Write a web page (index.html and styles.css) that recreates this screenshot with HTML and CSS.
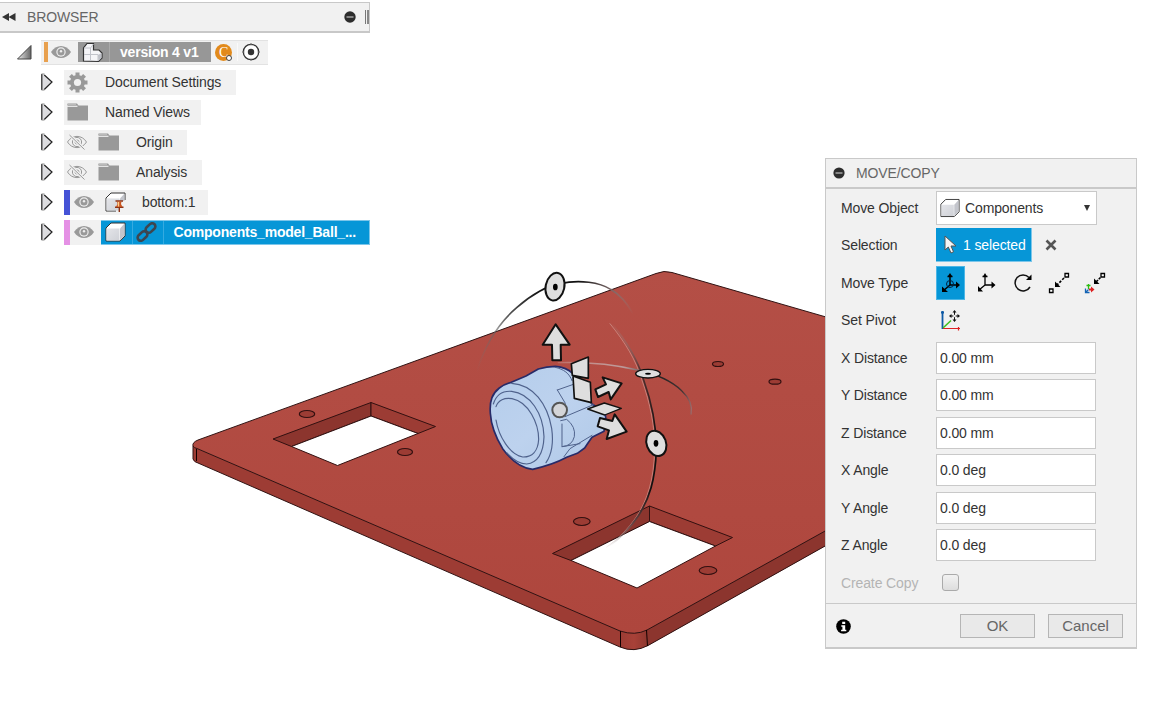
FILE: index.html
```html
<!DOCTYPE html>
<html lang="en">
<head>
<meta charset="utf-8">
<title>version 4 v1</title>
<link rel="stylesheet" href="styles.css">
</head>
<body>
<svg class="defs" width="0" height="0" aria-hidden="true">
  <defs>
    <linearGradient id="face" x1="0" y1="0" x2="1" y2="1"><stop offset="0" stop-color="#e4e5e9"/><stop offset="1" stop-color="#cfd1d7"/></linearGradient>
    <linearGradient id="tri" x1="0" y1="0" x2="1" y2="0"><stop offset="0" stop-color="#eee"/><stop offset="1" stop-color="#666"/></linearGradient>
    <symbol id="arrow-right" viewBox="0 0 13 18"><path d="M.8 1.500v15h2.700L11 9 3.500 1.500z" fill="#dcdcdf"/><path d="M.8 1v16M3.300 2 11 9 3.300 16.500" fill="none" stroke="#222" stroke-width="1.200"/><path d="M.5 1h3M.5 17h3" stroke="#888"/></symbol>
    <symbol id="eye" viewBox="0 0 20 14"><path d="M0 7C5-1 15-1 20 7 15 15 5 15 0 7z" fill="#999"/><circle cx="10" cy="7" r="4.7" fill="#eee"/><circle cx="10" cy="7" r="3.5" fill="#999"/><circle cx="10" cy="6.300" r="1.200" fill="#eee"/></symbol>
    <symbol id="eye-off" viewBox="0 0 20 16"><g fill="none" stroke="#999"><path d="M.5 8C5 .5 15 .5 19.5 8 15 15.500 5 15.500.5 8z"/><circle cx="10" cy="8" r="4.6"/><circle cx="10" cy="8" r="2"/><path d="M2.500 1 17.500 15.500" stroke="#f1f1f1" stroke-width="3"/><path d="M2.500 1 17.500 15.500"/></g></symbol>
    <symbol id="folder" viewBox="0 0 21 18"><path d="M.5.500h9.500l1.500 2H21V17.500H.5z" fill="#999"/><path d="M0 3.300h10.500" stroke="#eee" stroke-width="1.200"/><path d="M0 1.500h9" stroke="#bbb"/></symbol>
    <symbol id="cube" viewBox="0 0 21 20"><path d="M1 6 6 1h14v13l-5 5H1z" fill="#fff" stroke="#333"/><path d="M1.500 6.500h13v12h-13z" fill="url(#face)"/><path d="M15 6.500 19.500 1.500v12.300L15 18.500z" fill="#c3c5cc"/></symbol>
  </defs>
</svg>

<main class="viewport">
  <svg class="scene" viewBox="0 0 1161 702" width="1161" height="702">
    <defs>
      <linearGradient id="plate" x1="0" y1="0" x2="0" y2="1"><stop offset="0" stop-color="#b44f46"/><stop offset="1" stop-color="#ae463d"/></linearGradient>
      <linearGradient id="corner" x1="0" y1="0" x2="1" y2="0"><stop offset="0" stop-color="#9c3c34"/><stop offset=".5" stop-color="#a84138"/><stop offset="1" stop-color="#8f372f"/></linearGradient>
      <linearGradient id="ringTop" gradientUnits="userSpaceOnUse" x1="20" y1="0" x2="490" y2="0"><stop offset="0" stop-color="#777" stop-opacity="0"/><stop offset=".2" stop-color="#555"/><stop offset=".4" stop-color="#111"/><stop offset=".65" stop-color="#111"/><stop offset=".85" stop-color="#766"/><stop offset="1" stop-color="#888" stop-opacity="0"/></linearGradient>
      <linearGradient id="ringSide" gradientUnits="userSpaceOnUse" x1="0" y1="190" x2="0" y2="860"><stop offset="0" stop-color="#aaa" stop-opacity="0"/><stop offset=".2" stop-color="#533"/><stop offset=".5" stop-color="#111"/><stop offset=".75" stop-color="#111"/><stop offset=".9" stop-color="#644"/><stop offset="1" stop-color="#aaa" stop-opacity="0"/></linearGradient>
      <linearGradient id="ringFlat" gradientUnits="userSpaceOnUse" x1="260" y1="0" x2="670" y2="0"><stop offset="0" stop-color="#ddd" stop-opacity=".2"/><stop offset=".5" stop-color="#b99"/><stop offset=".75" stop-color="#222"/><stop offset=".92" stop-color="#433"/><stop offset="1" stop-color="#a77"/></linearGradient>
      <linearGradient id="body" x1="0" y1="0" x2="1" y2="1"><stop offset="0" stop-color="#b4cdeb"/><stop offset=".5" stop-color="#bdd2ee"/><stop offset="1" stop-color="#afc8e7"/></linearGradient>
    </defs>
    <!-- plate -->
    <g stroke-linejoin="round">
      <path d="M193 445V459Q194 462 198 463L620 647Q633 653 648 645.500L826 545.500V529L647 629 620 630 197 448z" fill="#9d3c34"/>
      <path d="M647 630 826 530.500V545.500L648 645.500z" fill="#8c352e"/>
      <path d="M620.500 631Q634 637 646.500 630L647.500 646Q634 652.500 620.500 647z" fill="url(#corner)"/>
      <path d="M193 446Q192 442.500 198 440L656 273.500Q664 270 672 272.500L826 317V530.500L647 630Q635 636 620 631L197 448.500Q194 448 193 446z" fill="url(#plate)"/>
      <g fill="none" stroke="#301313" stroke-width="1">
        <path d="M193 446Q192 442.500 198 440L656 273.500Q664 270 672 272.500L826 317M826 530.500 647 630Q635 636 620 631L197 448.500Q194 448 193 446V459Q194 462 198 463L620 647Q634 653 648 645.500L826 545.500"/>
        <path d="M196.500 449v12M620.500 631v16M646.500 630l1 16" stroke="#100"/>
      </g>
    </g>
    <!-- windows cut in the plate -->
    <g stroke="#321010" stroke-linejoin="round">
      <path d="M273 439 371 402.500V416L291.500 446.500z" fill="#8c352e"/>
      <path d="M371 402.500 435.500 426.500 418 433.500 371 416z" fill="#9c3c34"/>
      <path d="M291.500 446.500 371 416 418 433.500 337.500 465.500z" fill="#fff"/>
      <path d="M552.500 553.500 649.500 506V521.500L571 560.500z" fill="#8c352e"/>
      <path d="M649.500 506 732.500 537.500 715.500 546 649.500 521.500z" fill="#9c3c34"/>
      <path d="M571 560.500 649.500 521.500 715.500 546 637 588z" fill="#fff"/>
      <g fill="#9c3c34" stroke-width="1.200">
        <ellipse cx="307" cy="414" rx="7.700" ry="3.500"/><ellipse cx="405" cy="452" rx="7.500" ry="3.500"/>
        <ellipse cx="581.800" cy="521.500" rx="8.300" ry="4"/><ellipse cx="708" cy="570.500" rx="8.800" ry="4"/>
        <ellipse cx="718" cy="364" rx="5.500" ry="2.500"/><ellipse cx="775" cy="381.700" rx="6" ry="2.500"/>
      </g>
    </g>
    <!-- selected component and manipulator, drawn at triple scale -->
    <g transform="translate(470 260) scale(.33333)" stroke-linejoin="round" stroke-linecap="round">
      <path d="M61 460C58 420 68 400 88 384Q104 372 124 367L168 348 205 327Q230 319 256 319 290 322 308 340L345 402 366 432 402 455Q411 470 405 494L402 514 366 532Q352 552 344 564L322 580 290 592Q250 614 188 628 140 624 98 566 64 510 61 460z" fill="url(#body)" stroke="#282b68" stroke-width="5"/>
      <g fill="none" stroke="#4f628c" stroke-width="3.500">
        <path d="M125 370C190 374 232 432 245 505Q254 570 228 608"/>
        <path d="M70 432C80 400 100 392 125 394 180 400 220 460 222 530 220 585 200 608 170 612 150 612 130 600 110 578"/>
        <path d="M78 440C84 420 104 412 126 416 176 426 206 490 206 538 204 574 186 592 158 591 120 584 86 530 78 480"/>
        <path d="M262 390 316 371 346 408M262 390 286 430M285 470 370 434M272 482 290 478Q318 500 313 530 306 558 276 560V492M276 560 330 551M282 590 300 566 366 526M256 322C282 328 298 340 306 362M346 402 366 434" stroke-width="3"/>
      </g>
      <path d="M20 335C45 255 85 190 140 143 185 103 235 76 270 71 330 57 390 68 422 88 453 106 474 134 490 162" fill="none" stroke="url(#ringTop)" stroke-width="5"/>
      <path d="M425 190C470 245 503 300 520 357 546 430 560 500 559 570 556 660 538 716 505 768 480 805 450 835 415 860" transform="translate(-5 1)" fill="none" stroke="#e6d2cc" stroke-width="3" opacity=".4"/>
      <path d="M425 190C470 245 503 300 520 357 546 430 560 500 559 570 556 660 538 716 505 768 480 805 450 835 415 860" fill="none" stroke="url(#ringSide)" stroke-width="5"/>
      <path d="M265 308C340 306 430 313 503 330 562 343 602 360 635 392 660 415 668 436 663 462" fill="none" stroke="url(#ringFlat)" stroke-width="4"/>
      <g fill="#dedede" stroke="#111" stroke-width="6">
        <ellipse cx="255" cy="80" rx="28" ry="42" transform="rotate(12 255 80)"/>
        <ellipse cx="559" cy="550" rx="29" ry="39" transform="rotate(-20 559 550)"/>
        <ellipse cx="534" cy="341" rx="37" ry="13" stroke-width="4"/>
        <path d="M257 193 299 254H272L273 301H247L246 254H218z"/>
        <path d="M304 311 355 291V355L307 346zM309 348 361 367 364 428 313 415z" stroke-width="5"/>
        <path d="M376 388 408 373 398 352 455 370 422 418 416 396 384 411z"/>
        <path d="M390 474 427 483 434 463 470 515 410 537 417 511 383 499z"/>
        <path d="M353 447 403 429 454 445 404 465z" stroke-width="4"/>
        <circle cx="269" cy="450" r="22" fill="#d4d5d8" stroke="#555"/>
      </g>
      <ellipse cx="256" cy="81" rx="7" ry="10"/><ellipse cx="558" cy="550" rx="7" ry="10"/><ellipse cx="534" cy="341" rx="9" ry="3"/>
    </g>
  </svg>

  <aside class="browser">
    <header class="browser-head">
      <svg class="rewind" width="14" height="8" viewBox="0 0 14 8"><path d="M7 0v8L0 4zM13.500 0v8L6.500 4z" fill="#333"/></svg>
      <h2 class="title">BROWSER</h2>
      <svg width="12" height="12" viewBox="0 0 12 12"><circle cx="6" cy="6" r="5.700" fill="#2d2d2d"/><path d="M2.500 6h7" stroke="#ddd"/></svg>
      <span class="grip"></span>
    </header>
    <ul class="tree">
      <li class="row root">
        <svg class="expander" width="16" height="16" viewBox="0 0 16 16"><path d="M1.500 15 15 1.500V15z" fill="url(#tri)" stroke="#444"/></svg>
        <div class="band root-band">
          <span class="stripe orange"></span>
          <svg class="root-eye" width="20" height="14"><use href="#eye"/></svg>
          <div class="doc">
            <svg class="doc-icon" width="22" height="22" viewBox="0 0 22 22"><path d="M1.500 20V7L5 2.500h6.500V9H17l3 3v5l-3.500 3.500z" fill="#f5f5f8" stroke="#333" stroke-width="1.200"/><path d="M2 13.500h14M2 7h6.500v13M9 13.500h7V20M8.500 7l3-4" fill="none" stroke="#c2c4cb"/><path d="M16 14l3.500-2v5L16.500 20z" fill="#bfc1c8"/></svg>
            <span class="doc-name">version 4 v1</span>
          </div>
          <span class="badge">C<i class="badge-dot"></i></span>
          <span class="activate"><svg width="18" height="18" viewBox="0 0 18 18"><circle cx="9" cy="9" r="7.700" fill="#fff" stroke="#333" stroke-width="1.300"/><circle cx="9" cy="9" r="3.200" fill="#333"/><path d="M9 0v2.500M9 15.500V18M0 9h2.500M15.500 9H18" stroke="#777"/></svg></span>
        </div>
      </li>
      <li class="row">
        <svg class="expander" width="13" height="18"><use href="#arrow-right"/></svg>
        <div class="band w-settings"><svg class="lead" width="21" height="21" viewBox="-10.500 -10.500 21 21"><g fill="#999"><g id="teeth"><path d="M-2-10H2V10H-2zM-10-2V2H10V-2z"/></g><use href="#teeth" transform="rotate(45)"/><circle r="7.500"/></g><circle r="3.600" fill="#f1f1f1"/></svg><span class="name">Document Settings</span></div>
      </li>
      <li class="row">
        <svg class="expander" width="13" height="18"><use href="#arrow-right"/></svg>
        <div class="band w-views"><svg class="lead" width="21" height="18"><use href="#folder"/></svg><span class="name">Named Views</span></div>
      </li>
      <li class="row">
        <svg class="expander" width="13" height="18"><use href="#arrow-right"/></svg>
        <div class="band w-origin"><svg class="lead" width="20" height="16"><use href="#eye-off"/></svg><svg class="second" width="21" height="18"><use href="#folder"/></svg><span class="name">Origin</span></div>
      </li>
      <li class="row">
        <svg class="expander" width="13" height="18"><use href="#arrow-right"/></svg>
        <div class="band w-analysis"><svg class="lead" width="20" height="16"><use href="#eye-off"/></svg><svg class="second" width="21" height="18"><use href="#folder"/></svg><span class="name">Analysis</span></div>
      </li>
      <li class="row">
        <svg class="expander" width="13" height="18"><use href="#arrow-right"/></svg>
        <div class="band w-bottom"><span class="stripe blue"></span><svg class="comp-eye" width="20" height="14"><use href="#eye"/></svg>
          <svg class="pinned" width="21" height="20" viewBox="0 0 21 20"><path d="M1 6 6 1h14v7M1 6v13h10" fill="#fff" stroke="#333"/><path d="M1.500 6.500h13v12h-13z" fill="url(#face)"/><path d="M15 6.500 19.500 1.500V9H15z" fill="#c3c5cc"/><path d="M10.500 9h7.500M10 15.300h8.500M14.300 15v5" stroke="#8c3418" stroke-width="1.400"/><path d="M12 9.500h4.500L16 12l1.500 3h-6.500l1.500-3z" fill="#c9541f"/><path d="M13.500 10v4.500" stroke="#ffd08a" stroke-width="1.300"/></svg>
          <span class="name comp-name">bottom:1</span></div>
      </li>
      <li class="row">
        <svg class="expander" width="13" height="18"><use href="#arrow-right"/></svg>
        <div class="band w-selected"><span class="stripe pink"></span><svg class="comp-eye" width="20" height="14"><use href="#eye"/></svg>
          <div class="selected">
            <span class="cell cube-cell"><svg width="21" height="20"><use href="#cube"/></svg></span>
            <span class="cell link-cell"><svg width="21" height="20" viewBox="0 0 21 20"><g fill="none" stroke="#3d4650" stroke-width="2.600"><rect x="-5.500" y="-3.200" width="11" height="6.400" rx="3.200" transform="translate(14.500 6) rotate(-43)"/><rect x="-5.500" y="-3.200" width="11" height="6.400" rx="3.200" transform="translate(6.500 14) rotate(-43)"/></g></svg></span>
            <span class="selected-name">Components_model_Ball_...</span>
          </div>
        </div>
      </li>
    </ul>
  </aside>

  <section class="dialog">
    <header class="dialog-head">
      <svg width="12" height="12" viewBox="0 0 12 12"><circle cx="6" cy="6" r="5.600" fill="#2d2d2d"/><path d="M2.500 6h7" stroke="#ddd"/></svg>
      <h2 class="title">MOVE/COPY</h2>
    </header>
    <div class="form">
      <div class="field"><span class="label">Move Object</span>
        <div class="select"><svg width="20" height="20" viewBox="0 0 21 20"><use href="#cube" width="21" height="20"/></svg><span>Components</span><i class="caret"></i></div></div>
      <div class="field"><span class="label">Selection</span>
        <div class="pick"><svg width="13" height="19" viewBox="0 0 13 19"><path d="M1 1v14l3.300-3 2.700 6 2.500-1.200L7 11h5z" fill="#f4f4f4" stroke="#555"/></svg><span>1 selected</span></div>
        <svg class="clear" width="12" height="12" viewBox="0 0 12 12"><path d="m1.500 1.500 9 9m0-9-9 9" stroke="#555" stroke-width="2.600"/></svg></div>
      <div class="field"><span class="label">Move Type</span>
        <div class="modes">
          <span class="mode active"><svg width="20" height="20" viewBox="0 0 20 20"><path d="M9 12V2M6.500 3.500h5M9 12h9M9 12l-7 6" stroke="#000" stroke-width="1.500"/><path d="m15 8.500 4 3.500-4 3.500zM1 13.500V19h6zM9 0l2.300 3.500H6.700z"/><circle cx="9" cy="11" r="3.500" fill="none" stroke="#024"/></svg></span>
          <span class="mode"><svg width="20" height="20" viewBox="0 0 20 20"><path d="M8 12V2M5.500 3.500h5M8 12h8M8 12l-6 5" fill="none" stroke="#000" stroke-width="1.300"/><path d="m14.500 8.500 4 3.500-4 3.500zM1 13v5.500h5zM8 0l2 3.500H6z"/></svg></span>
          <span class="mode"><svg width="20" height="20" viewBox="0 0 20 20"><path d="M16 4.500A8 8 0 1 0 17 14" fill="none" stroke="#111" stroke-width="1.500"/><path d="M18.500 1.500v5.500H13z"/></svg></span>
          <span class="mode"><svg width="22" height="22" viewBox="0 0 22 22"><path d="m16 6-8 8" stroke="#000" stroke-width="1.600" stroke-dasharray="2.500 1.500"/><path d="M7 9.500V15h5.500z"/><path d="M17 1.500h3.500V5H17zM1.500 17H5v3.500H1.500z" fill="#fff" stroke="#000" stroke-width="1.300"/></svg></span>
          <span class="mode"><svg width="22" height="22" viewBox="0 0 22 22"><path d="m16.500 5.500-5 5" stroke="#000" stroke-width="1.600" stroke-dasharray="2.500 1"/><path d="M10 6.500V12h5.500z"/><path d="M17 1.500h3.500V5H17z" fill="#fff" stroke="#000" stroke-width="1.300"/><path d="M4.500 17v-5M2.500 13.500h4" stroke="#2bbd12" stroke-width="1.300"/><path d="M5 17.500h4" stroke="#d22" stroke-width="2"/><path d="m7 14.500 3.500 3-3.500 3z" fill="#d22"/><path d="M1.500 16.500v4h4M2 20l2.500-2.500" fill="none" stroke="#1464b4" stroke-width="1.300"/></svg></span>
        </div></div>
      <div class="field"><span class="label">Set Pivot</span>
        <svg class="pivot" width="22" height="22" viewBox="0 0 22 22"><path d="M2.500 20V2M1 3.500h3" stroke="#0f5aa6" stroke-width="1.800"/><path d="M3 19.500h17M18.500 18v3.500" stroke="#d22" stroke-width="1.200"/><path d="m3 19 8-7.500" stroke="#3bbf1c" stroke-width="1.500"/><path d="M14.500 3v8M10.500 7h8" stroke="#111"/><path d="m14.500 1 2 2.500h-4zM14.500 13l2-2.500h-4zM9 7l2.500-2v4zM20 7l-2.500-2v4z" fill="#111"/><circle cx="14.500" cy="7" r="1.300" fill="#eee"/></svg></div>
      <label class="field"><span class="label">X Distance</span><input class="value" value="0.00 mm"></label>
      <label class="field"><span class="label">Y Distance</span><input class="value" value="0.00 mm"></label>
      <label class="field"><span class="label">Z Distance</span><input class="value" value="0.00 mm"></label>
      <label class="field"><span class="label">X Angle</span><input class="value" value="0.0 deg"></label>
      <label class="field"><span class="label">Y Angle</span><input class="value" value="0.0 deg"></label>
      <label class="field"><span class="label">Z Angle</span><input class="value" value="0.0 deg"></label>
      <div class="field"><span class="label disabled">Create Copy</span><span class="check"></span></div>
    </div>
    <footer class="dialog-foot">
      <svg width="15" height="15" viewBox="0 0 15 15"><circle cx="7.500" cy="7.500" r="7.300"/><path d="M6.200 2.800h3v2.300h-3zM5.300 6.300h3.900v4.500h1.100v1.500H5.100v-1.500h1.300v-3H5.300z" fill="#fff"/></svg>
      <button class="btn">OK</button>
      <button class="btn">Cancel</button>
    </footer>
  </section>
</main>
</body>
</html>
```

FILE: styles.css
```css
* { box-sizing: border-box; }
body { margin: 0; background: #fff; font: 14px/18px "Liberation Sans", Arial, sans-serif; letter-spacing: -.12px; color: #333; }
svg { display: block; flex: none; }
.defs { position: absolute; }
.viewport { position: relative; width: 1161px; height: 702px; overflow: hidden; }
.scene { position: absolute; inset: 0; }
.title { margin: 0; font-size: 14px; font-weight: 400; color: #666; }

/* Browser palette floats over the canvas */
.browser { position: absolute; left: 0; top: 2px; width: 370px; }
.browser-head { display: flex; align-items: center; height: 31px; padding-left: 2px; background: #f1f1f1; border: solid #c8c8c8; border-width: 1px 1px 2px 0; }
.browser-head .title { flex: 1; padding-left: 11px; }
.grip { width: 4px; height: 14px; margin-left: 9px; border-left: 1px solid #777; border-right: 2px solid #888; }
.tree { margin: 0; padding: 4px 0 0; list-style: none; }
.row { display: flex; align-items: center; height: 30px; padding-left: 40.500px; }
.row.root { padding-left: 16px; }
.expander { margin-right: 10.500px; }
.root .expander { margin-right: 9px; }
.band { display: flex; align-items: center; height: 25px; background: #f1f1f1; white-space: nowrap; }
.root-band { width: 227px; padding-left: 3px; border: solid #e2e2e2; border-width: 1px 0; }
.w-settings { width: 172px; }
.w-views { width: 137px; }
.w-origin { width: 123px; }
.w-analysis { width: 138px; }
.w-bottom { width: 144px; }
.w-selected { width: 306px; }
.stripe { width: 6px; height: 25px; flex: none; }
.stripe.orange { width: 4px; height: 20px; background: #e8a04e; }
.stripe.blue { background: #4553d6; }
.stripe.pink { background: #e591e5; }
.root-eye { margin: 0 7px 0 3px; }
.doc { display: flex; align-items: center; width: 133px; height: 20px; background: #979797; font-weight: 700; color: #fff; letter-spacing: -.2px; }
.doc-icon { margin: 0 5px 0 4px; }
.doc-name { padding-left: 10px; border-left: 1px solid #aaa; line-height: 20px; }
.badge { position: relative; width: 17px; height: 17px; margin: 0 5px 0 4px; border-radius: 50%; background: #e28a1b; color: #fff; font: 14px/17px "Liberation Serif", serif; text-align: center; }
.badge-dot { position: absolute; right: 0; bottom: 0; width: 6px; height: 6px; border: 1px solid #444; border-radius: 50%; background: #fff; }
.activate { padding-left: 4px; border-left: 1px solid #fafafa; }
.lead { margin-left: 3px; }
.lead + .name { padding-left: 17px; }
.second { margin-left: 11px; }
.second + .name { padding-left: 17px; }
.comp-eye { margin-left: 3.500px; }
.pinned { margin-left: 11.500px; }
.comp-name { padding-left: 16px; }
.selected { display: flex; align-items: center; width: 269px; height: 25px; margin-left: 7.500px; background: #0696d7; border: solid #7cc6ea; border-width: 1px 1px 1px 0; color: #fff; font-weight: 700; letter-spacing: -.2px; }
.cell { display: flex; align-items: center; justify-content: center; height: 23px; border-right: 1px solid #35aae0; }
.cube-cell { width: 32px; padding-right: 3px; }
.link-cell { width: 31px; padding-right: 3px; }
.selected-name { padding-left: 9.500px; }

/* Move/Copy dialog floats over the canvas */
.dialog { position: absolute; left: 825px; top: 158px; display: flex; flex-direction: column; width: 312px; height: 491px; background: #f1f1f1; border: 1px solid #c9c9c9; border-bottom-width: 2px; }
.dialog-head { display: flex; align-items: center; gap: 11px; height: 30px; padding-left: 7px; border-bottom: 2px solid #c9c9c9; }
.form { height: 415px; border-bottom: 1px solid #c9c9c9; }
.field { display: flex; align-items: center; height: 37.500px; padding-left: 15px; }
.label { width: 95px; flex: none; }
.label.disabled { color: #b4b4b4; }
.select { display: flex; align-items: center; gap: 5px; width: 161px; height: 34px; padding: 0 6px 0 3px; background: #fff; border: 1px solid #c9c9c9; }
.caret { margin-left: auto; border: solid transparent; border-width: 6px 3.500px 0; border-top-color: #333; }
.pick { display: flex; align-items: center; gap: 6px; width: 96px; height: 34px; padding-left: 8px; background: #0696d7; border: solid #7cc6ea; border-width: 0 1px 1px 0; color: #fff; }
.clear { margin-left: 13px; }
.modes { display: flex; gap: 7px; }
.mode { display: grid; place-items: center; width: 29px; height: 34px; }
.mode.active { background: #0696d7; border: 1px solid #4cb6e6; }
.pivot { margin-left: 4px; }
.value { width: 160px; height: 32px; padding: 0 3px; border: 1px solid #c9c9c9; border-radius: 0; background: #fff; font: inherit; letter-spacing: inherit; color: #333; }
.check { width: 17px; height: 17px; margin-left: 6px; border: 1px solid #aaa; border-radius: 3px; background: linear-gradient(#f2f2f2, #ddd); }
.dialog-foot { display: flex; align-items: center; flex: 1; gap: 13px; padding: 1px 13px 0 10px; }
.dialog-foot svg { margin-right: auto; }
.btn { width: 75px; height: 24px; padding: 0; background: #e9e9e9; border: 1px solid #b5b5b5; border-radius: 0; font: 15px/20px "Liberation Sans", Arial, sans-serif; color: #666; }
```
